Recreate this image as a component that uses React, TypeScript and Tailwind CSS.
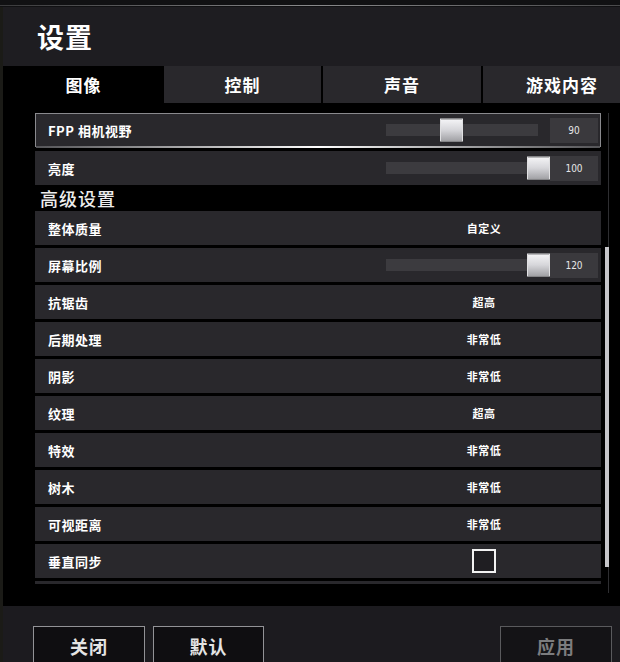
import React from "react";

type Row =
  | { kind: "value"; label: string; value: string }
  | { kind: "slider"; label: string; value: string; thumb: number; selected?: boolean }
  | { kind: "check"; label: string };

const topRows: Row[] = [
  { kind: "slider", label: "FPP 相机视野", value: "90", thumb: 54, selected: true },
  { kind: "slider", label: "亮度", value: "100", thumb: 141 },
];

const advRows: Row[] = [
  { kind: "value", label: "整体质量", value: "自定义" },
  { kind: "slider", label: "屏幕比例", value: "120", thumb: 141 },
  { kind: "value", label: "抗锯齿", value: "超高" },
  { kind: "value", label: "后期处理", value: "非常低" },
  { kind: "value", label: "阴影", value: "非常低" },
  { kind: "value", label: "纹理", value: "超高" },
  { kind: "value", label: "特效", value: "非常低" },
  { kind: "value", label: "树木", value: "非常低" },
  { kind: "value", label: "可视距离", value: "非常低" },
  { kind: "check", label: "垂直同步" },
  { kind: "check", label: "" },
];

function SettingRow({ row }: { row: Row }) {
  const selected = row.kind === "slider" && row.selected;
  return (
    <div
      className={
        "relative flex items-center h-[34px] w-[566px] shrink-0 bg-[#29282c] " +
        (selected ? "border border-[#8a8a8e]" : "border border-[#29282c]")
      }
    >
      <div className="w-[398px] pl-[12px] text-[13px] font-bold text-white leading-none tracking-[0.5px]">
        {row.label}
      </div>
      {row.kind === "value" && (
        <div className="w-[100px] text-center text-[11px] font-bold text-white leading-none tracking-[0.5px]">
          {row.value}
        </div>
      )}
      {row.kind === "check" && (
        <div className="w-[100px] flex justify-center">
          <div className="w-[24px] h-[24px] border-2 border-[#f2f2f2] bg-[#1f1e22]" />
        </div>
      )}
      {row.kind === "slider" && (
        <div className="relative flex items-center ml-[-48px]">
          <div className="w-[152px] h-[12px] bg-[#3c3b3f]" />
          <div className="w-[12px]" />
          <div className="w-[48px] h-[25px] bg-[#3a393d] flex items-center justify-center text-[10px] text-[#e6e6e6] font-['DejaVu_Sans_Condensed','DejaVu_Sans',sans-serif]">
            {row.value}
          </div>
          <div
            className="absolute top-1/2 -translate-y-1/2 w-[23px] h-[23px] bg-gradient-to-b from-[#f4f4f6] via-[#d6d6da] to-[#a4a4a8] border border-[#e0e0e2]"
            style={{ left: row.thumb }}
          />
        </div>
      )}
      {selected && (
        <div className="absolute left-0 right-0 bottom-[-2px] h-[2px] bg-gradient-to-r from-[#555558] via-[#ffffff] to-[#555558]" />
      )}
    </div>
  );
}

export default function App() {
  return (
    <div className="w-[620px] h-[662px] bg-[#1b1b17] flex flex-col overflow-hidden font-['Noto_Sans_CJK_SC','Noto_Sans',sans-serif]">
      <div className="h-[7px] shrink-0 bg-[#111113] flex flex-col">
        <div className="h-[5px]" />
        <div className="h-[1px] bg-gradient-to-r from-[#3a3a3c] via-[#8a8a8c] to-[#4a4a4c]" />
      </div>
      <div className="flex-1 flex flex-col ml-[3px] overflow-hidden">
        <div className="h-[59px] shrink-0 bg-[#1e1d21] flex items-center pl-[34px]">
          <span className="text-[27px] font-bold text-white leading-none tracking-[1px]">设置</span>
        </div>
        <div className="h-[37px] shrink-0 flex bg-black overflow-hidden">
          <div className="w-[161px] shrink-0 bg-black flex items-center justify-center text-[17px] font-bold text-white tracking-[1px]">
            图像
          </div>
          <div className="w-[157px] shrink-0 bg-[#29282c] flex items-center justify-center text-[17px] font-bold text-white tracking-[1px]">
            控制
          </div>
          <div className="w-[158px] shrink-0 ml-[2px] bg-[#29282c] flex items-center justify-center text-[17px] font-bold text-white tracking-[1px]">
            声音
          </div>
          <div className="w-[158px] shrink-0 ml-[2px] bg-[#29282c] flex items-center justify-center text-[17px] font-bold text-white tracking-[1px]">
            游戏内容
          </div>
        </div>
        <div className="h-[503px] shrink-0 bg-black flex">
          <div className="h-[481px] w-[598px] overflow-hidden pl-[32px] pt-[10px] flex flex-col">
            <div className="flex flex-col gap-[4px]">
              {topRows.map((r) => (
                <SettingRow key={r.label} row={r} />
              ))}
            </div>
            <div className="h-[26px] shrink-0 flex items-center pl-[5px] text-[18px] font-medium text-[#ececec] leading-none tracking-[1px]">
              高级设置
            </div>
            <div className="flex flex-col gap-[3px]">
              {advRows.map((r, i) => (
                <SettingRow key={i} row={r} />
              ))}
            </div>
          </div>
          <div className="relative w-[19px] h-[490px]">
            <div className="absolute left-[7px] top-[10px] bottom-0 w-[1px] bg-[#2e2e31]" />
            <div className="absolute left-[4px] top-[144px] w-[4px] h-[320px] bg-[#c6c6ca]" />
          </div>
        </div>
        <div className="flex-1 bg-[#1c1b1f] flex items-start pt-[20px] pl-[30px] pr-[8px]">
          <button className="w-[112px] h-[40px] bg-[#0f0e11] border border-[#929296] text-[18px] font-bold text-[#e4e4e4] tracking-[1px]">
            关闭
          </button>
          <button className="w-[111px] h-[40px] ml-[8px] bg-[#0f0e11] border border-[#929296] text-[18px] font-bold text-[#e4e4e4] tracking-[1px]">
            默认
          </button>
          <div className="flex-1" />
          <button className="w-[112px] h-[40px] bg-[#141316] border border-[#5a5a5d] text-[18px] font-bold text-[#7c7c7e] tracking-[1px]">
            应用
          </button>
        </div>
      </div>
    </div>
  );
}
